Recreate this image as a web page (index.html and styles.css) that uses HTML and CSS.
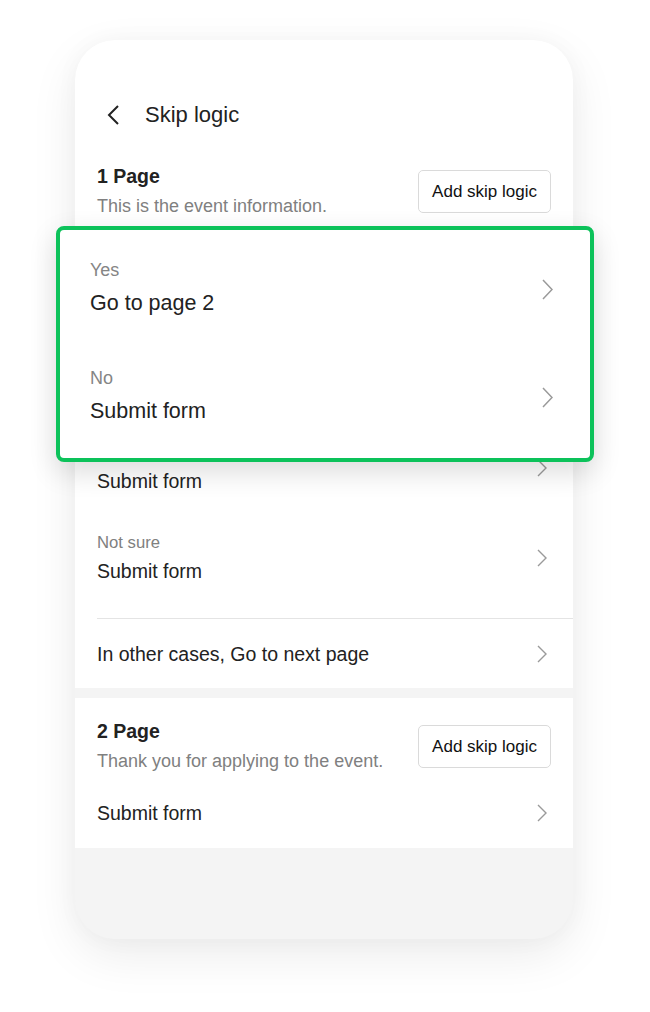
FILE: index.html
```html
<!DOCTYPE html>
<html lang="en">
<head>
<meta charset="utf-8">
<title>Skip logic</title>
<link rel="stylesheet" href="styles.css">
</head>
<body>
<div class="phone">
  <section class="sec sec1">
    <div class="nav">
      <svg class="back" width="12" height="20" viewBox="0 0 12 20"><path d="M11 1 L2 10 L11 19" fill="none" stroke="#222" stroke-width="2"/></svg>
      <span class="nav-title">Skip logic</span>
    </div>
    <div class="page-head">
      <div class="ph-text">
        <div class="ph-title">1 Page</div>
        <div class="ph-desc">This is the event information.</div>
      </div>
      <button class="add-btn">Add skip logic</button>
    </div>
    <div class="question"></div>
    <ul class="rules">
      <li class="rule covered">
        <div class="rule-text"><div class="rule-label">Yes</div><div class="rule-value">Go to page 2</div></div>
        <svg class="chev" width="10" height="18" viewBox="0 0 10 18"><path d="M1 1 L9 9 L1 17" fill="none" stroke="#9a9a9a" stroke-width="1.4"/></svg>
      </li>
      <li class="rule">
        <div class="rule-text"><div class="rule-label covered">No</div><div class="rule-value">Submit form</div></div>
        <svg class="chev" width="10" height="18" viewBox="0 0 10 18"><path d="M1 1 L9 9 L1 17" fill="none" stroke="#9a9a9a" stroke-width="1.4"/></svg>
      </li>
      <li class="rule">
        <div class="rule-text"><div class="rule-label">Not sure</div><div class="rule-value">Submit form</div></div>
        <svg class="chev" width="10" height="18" viewBox="0 0 10 18"><path d="M1 1 L9 9 L1 17" fill="none" stroke="#9a9a9a" stroke-width="1.4"/></svg>
      </li>
    </ul>
    <div class="divider"></div>
    <div class="row">
      <span>In other cases, Go to next page</span>
      <svg class="chev" width="10" height="18" viewBox="0 0 10 18"><path d="M1 1 L9 9 L1 17" fill="none" stroke="#9a9a9a" stroke-width="1.4"/></svg>
    </div>
  </section>
  <section class="sec sec2">
    <div class="page-head page-head-2">
      <div class="ph-text">
        <div class="ph-title">2 Page</div>
        <div class="ph-desc">Thank you for applying to the event.</div>
      </div>
      <button class="add-btn">Add skip logic</button>
    </div>
    <div class="row row-submit">
      <span>Submit form</span>
      <svg class="chev" width="10" height="18" viewBox="0 0 10 18"><path d="M1 1 L9 9 L1 17" fill="none" stroke="#9a9a9a" stroke-width="1.4"/></svg>
    </div>
  </section>
</div>

<div class="zoom-card">
  <div class="z-rule">
    <div class="rule-text"><div class="z-label">Yes</div><div class="z-value">Go to page 2</div></div>
    <svg class="z-chev" width="11" height="21" viewBox="0 0 11 21"><path d="M1 1 L10 10.5 L1 20" fill="none" stroke="#9a9a9a" stroke-width="1.5"/></svg>
  </div>
  <div class="z-rule">
    <div class="rule-text"><div class="z-label">No</div><div class="z-value">Submit form</div></div>
    <svg class="z-chev" width="11" height="21" viewBox="0 0 11 21"><path d="M1 1 L10 10.5 L1 20" fill="none" stroke="#9a9a9a" stroke-width="1.5"/></svg>
  </div>
</div>
</body>
</html>
```

FILE: styles.css
```css
* { box-sizing: border-box; }

html, body {
  margin: 0;
  padding: 0;
  background: #ffffff;
}

body {
  position: relative;
  width: 650px;
  height: 1012px;
  overflow: hidden;
  font-family: "Liberation Sans", Arial, sans-serif;
  color: #222;
}

.phone {
  margin: 40px 0 0 75px;
  width: 498px;
  height: 899px;
  border-radius: 40px;
  background: #f4f4f4;
  overflow: hidden;
  box-shadow: 0 16px 48px rgba(0, 0, 0, 0.08), 0 0 24px rgba(0, 0, 0, 0.03);
}

.sec {
  background: #ffffff;
}

.sec2 {
  margin-top: 10px;
}

.nav {
  display: flex;
  align-items: center;
  height: 93px;
  padding: 57px 0 0 32px;
  gap: 26px;
}

.back { display: block; flex: none; }

.nav-title {
  font-size: 22px;
  line-height: 36px;
  color: #222;
}

.page-head {
  display: flex;
  align-items: center;
  justify-content: space-between;
  padding: 31px 22px 0 22px;
}

.page-head-2 {
  padding-top: 21px;
}

.ph-title {
  font-size: 19.5px;
  font-weight: 700;
  line-height: 24px;
  color: #222;
}

.ph-desc {
  margin-top: 8px;
  font-size: 18px;
  line-height: 20px;
  color: #808080;
}

.add-btn {
  flex: none;
  height: 43px;
  padding: 0 13px;
  margin-top: 3px;
  border: 1px solid #dadada;
  border-radius: 5px;
  background: #fff;
  font-family: "Liberation Sans", Arial, sans-serif;
  font-size: 17px;
  color: #111;
}

.question {
  height: 116px;
}

.rules {
  list-style: none;
  margin: 0;
  padding: 0 0 16px 0;
}

.rule {
  display: flex;
  align-items: center;
  justify-content: space-between;
  height: 90px;
  padding: 20px 26px 18px 22px;
}

.covered {
  visibility: hidden;
}

.rule-label {
  font-size: 16.7px;
  line-height: 20px;
  color: #808080;
}

.rule-value {
  margin-top: 6px;
  font-size: 19.5px;
  line-height: 24px;
  color: #222;
}

.chev { display: block; flex: none; }

.divider {
  height: 1px;
  margin-left: 22px;
  background: #e4e4e4;
}

.row {
  display: flex;
  align-items: center;
  justify-content: space-between;
  padding: 23px 26px 22px 22px;
  font-size: 19.5px;
  line-height: 24px;
  color: #222;
}

.row-submit {
  padding-top: 30px;
  padding-bottom: 23px;
}

.zoom-card {
  position: absolute;
  top: 226px;
  left: 56px;
  width: 538px;
  height: 236px;
  border: 4px solid #0cc25a;
  border-radius: 8px;
  background: #ffffff;
  padding: 0 37px 12px 30px;
  box-shadow: 0 10px 28px rgba(0, 0, 0, 0.14);
}

.z-rule {
  display: flex;
  align-items: center;
  justify-content: space-between;
  height: 108px;
  padding: 29px 0 21px 0;
}

.z-label {
  font-size: 18px;
  line-height: 22px;
  color: #858585;
}

.z-value {
  margin-top: 8px;
  font-size: 21.5px;
  line-height: 28px;
  color: #222;
}

.z-chev {
  display: block;
  flex: none;
  margin-top: 2px;
}
```
